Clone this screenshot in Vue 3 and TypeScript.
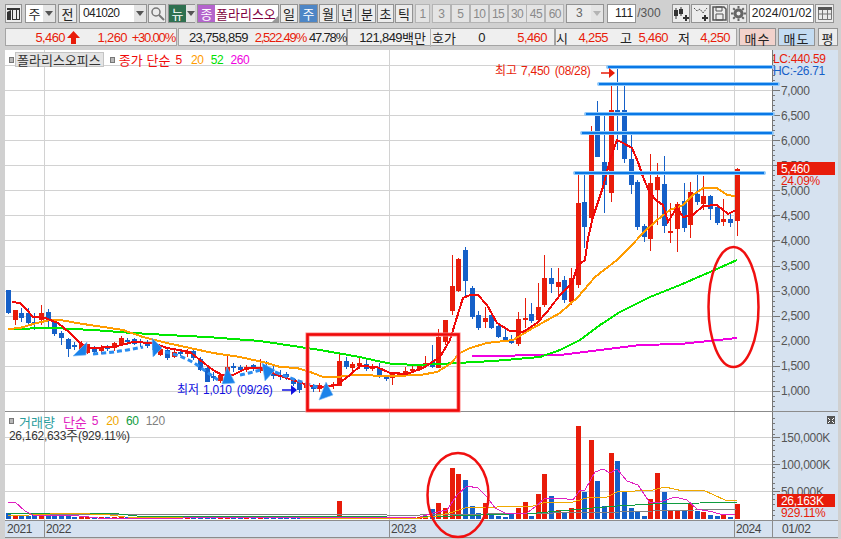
<script setup lang="ts">
type Candle = [number, number, number, number, number];

// top, bottom, high, low, blue (screen px)
const candles: Candle[] = [
  [290, 313, 290, 314, 1], [310, 320, 310, 325, 0], [313, 318, 308, 322, 1], [313, 323, 308, 325, 1],
  [322, 323, 313, 330, 1], [313, 320, 305, 325, 0], [312, 320, 309, 327, 1], [322, 334, 320, 336, 1],
  [333, 338, 331, 345, 1], [339, 349, 338, 357, 1], [345, 346, 342, 350, 1], [344, 350, 341, 352, 0],
  [344, 353, 344, 354, 0], [347, 352, 346, 354, 1], [347, 351, 345, 354, 0], [347, 348, 345, 351, 1],
  [343, 348, 342, 351, 0], [338, 344, 336, 345, 0], [340, 341, 338, 345, 1], [339, 344, 338, 345, 1],
  [341, 343, 339, 347, 1], [342, 346, 340, 348, 1], [344, 350, 340, 356, 1], [349, 355, 348, 356, 0],
  [350, 358, 348, 360, 1], [352, 357, 350, 358, 0], [352, 353, 349, 356, 1], [351, 354, 349, 357, 0],
  [351, 358, 350, 360, 1], [359, 370, 357, 371, 1], [368, 382, 367, 382, 1], [376, 378, 372, 381, 1],
  [375, 381, 373, 383, 0], [367, 375, 356, 376, 0], [366, 368, 363, 372, 1], [367, 370, 365, 372, 1],
  [367, 370, 365, 372, 0], [365, 369, 364, 371, 1], [367, 371, 359, 373, 0], [368, 370, 361, 375, 1],
  [374, 376, 366, 379, 1], [375, 377, 370, 380, 1], [374, 377, 372, 380, 1], [379, 384, 378, 386, 1],
  [383, 390, 382, 393, 1], [385, 388, 383, 391, 0], [386, 389, 384, 392, 1], [385, 389, 383, 392, 0],
  [385, 387, 383, 390, 0], [384, 386, 382, 389, 0], [361, 386, 353, 386, 0], [361, 367, 357, 369, 1],
  [364, 368, 362, 371, 0], [363, 366, 357, 369, 0], [364, 369, 359, 371, 1], [366, 369, 364, 371, 0],
  [368, 377, 363, 378, 1], [376, 379, 375, 381, 1], [374, 378, 374, 385, 0], [374, 375, 372, 376, 0],
  [371, 373, 367, 376, 0], [369, 371, 366, 373, 0], [365, 370, 365, 371, 0], [363, 366, 356, 367, 0],
  [362, 367, 345, 368, 1], [337, 368, 329, 368, 0], [320, 342, 320, 345, 0], [286, 311, 255, 315, 0],
  [259, 291, 258, 292, 0], [250, 281, 247, 298, 1], [288, 317, 286, 319, 1], [315, 328, 311, 330, 1],
  [318, 322, 307, 328, 0], [315, 328, 312, 329, 1], [326, 337, 324, 338, 1], [337, 340, 328, 341, 1],
  [340, 343, 335, 344, 1], [319, 344, 312, 346, 0], [318, 320, 298, 328, 0], [314, 321, 303, 323, 1],
  [307, 320, 283, 322, 0], [278, 305, 255, 307, 0], [278, 284, 268, 293, 1], [282, 287, 268, 297, 0],
  [280, 300, 276, 303, 1], [278, 302, 268, 305, 0], [203, 285, 174, 288, 0], [202, 227, 174, 248, 1],
  [134, 218, 126, 220, 0], [115, 157, 101, 157, 1], [162, 185, 115, 213, 1], [110, 193, 83, 202, 0],
  [110, 113, 67, 150, 1], [110, 159, 85, 163, 1], [159, 185, 134, 194, 1], [182, 227, 180, 230, 1],
  [226, 237, 224, 242, 1], [183, 239, 154, 251, 0], [177, 190, 163, 225, 0], [184, 226, 156, 233, 1],
  [231, 232, 203, 243, 0], [204, 229, 202, 252, 0], [201, 228, 183, 232, 1], [192, 225, 182, 238, 0],
  [194, 202, 171, 205, 1], [196, 204, 176, 210, 0], [196, 209, 195, 220, 1], [207, 223, 206, 225, 1],
  [219, 222, 199, 226, 0], [219, 223, 213, 227, 1], [169, 221, 168, 236, 0],
];
const cx = (i: number) => Math.round(8 + 6.623 * i);

const volTops: Record<number, number> = {
  0: 513, 1: 515, 2: 515, 3: 516, 4: 515, 5: 516, 6: 515, 7: 516, 8: 516, 9: 516, 50: 501,
  64: 509, 65: 503, 66: 508, 67: 468, 68: 474, 69: 480, 70: 506, 71: 513, 72: 503, 73: 515, 74: 516, 75: 517,
  76: 514, 77: 508, 78: 502, 79: 516, 80: 494, 81: 474, 82: 496, 83: 510, 84: 513, 85: 508, 86: 426, 87: 492,
  88: 440, 89: 481, 90: 506, 91: 453, 92: 461, 93: 492, 94: 508, 95: 511, 96: 516, 97: 499, 98: 473, 99: 492,
  100: 510, 101: 511, 102: 511, 103: 504, 104: 511, 105: 512, 106: 515, 107: 516, 108: 515, 109: 517, 110: 504,
};
const volBars = candles.map((c, i) => ({ x: cx(i) - 2, y: volTops[i] ?? 517, blue: c[4] === 1 }));

const pts = (a: number[][]) => a.map((p) => p.join(",")).join(" ");

const ma5 = pts([[12,302],[20,303],[27,310],[33,317],[45,318],[58,323],[70,333],[80,343],[90,348],[113,347],[133,342],[153,343],[167,348],[190,352],[200,360],[213,370],[222,375],[233,375],[247,368],[263,368],[277,375],[293,380],[307,385],[320,387],[337,385],[350,375],[360,366],[377,367],[390,373],[407,374],[423,368],[440,357],[450,340],[457,317],[463,298],[470,295],[478,295],[487,305],[497,323],[510,331],[523,332],[537,323],[547,312],[560,295],[572,283],[578,265],[585,260],[588,238],[593,217],[603,187],[610,160],[617,140],[623,143],[632,148],[638,162],[643,177],[650,193],[657,201],[663,205],[668,222],[677,207],[683,217],[693,215],[703,206],[717,205],[728,214],[736,210]]);
const ma20 = pts([[8,329],[20,328],[33,324],[50,320],[60,320],[83,324],[110,328],[123,330],[143,337],[167,343],[190,348],[213,353],[240,357],[267,363],[280,367],[297,368],[313,373],[323,377],[337,377],[353,375],[393,376],[420,375],[437,372],[450,364],[460,353],[470,348],[487,343],[513,340],[533,328],[560,313],[578,297],[595,277],[617,260],[630,247],[643,233],[657,220],[670,210],[683,205],[693,195],[703,188],[717,188],[727,195],[735,196]]);
const ma52 = pts([[8,329],[53,328],[93,330],[133,333],[167,335],[207,337],[260,341],[280,344],[300,347],[320,350],[337,353],[360,357],[377,361],[393,364],[420,365],[457,363],[493,361],[540,357],[560,350],[580,340],[600,325],[620,312],[650,297],[680,285],[710,272],[737,260]]);
const ma260 = pts([[472,356],[560,355],[600,350],[640,345],[680,344],[737,338]]);

const vol5 = pts([[8,502],[15,502],[25,511],[33,515],[70,515],[98,518],[183,518],[420,517],[433,513],[447,510],[457,495],[467,486],[478,488],[487,497],[495,508],[507,514],[527,513],[535,507],[545,498],[567,499],[573,500],[580,490],[585,490],[595,472],[603,469],[610,473],[617,469],[627,481],[638,485],[650,503],[660,502],[675,497],[687,500],[697,509],[713,512],[723,515],[735,514]]);
const vol20 = pts([[8,516],[50,514],[70,513],[110,515],[125,517],[300,518],[420,518],[437,516],[453,512],[465,508],[497,507],[533,506],[547,502],[573,502],[590,497],[607,497],[617,492],[653,490],[665,487],[683,491],[703,490],[725,500],[737,501]]);
const vol60 = pts([[8,513],[110,513],[137,516],[303,516],[387,517],[420,517],[453,516],[537,513],[593,508],[617,506],[653,504],[700,503],[703,502],[737,502]]);
const vol120 = pts([[37,514],[387,515],[420,515],[620,512],[653,511],[737,509]]);

const hLines = [
  [608, 772, 67], [599, 778, 84], [586, 773, 114], [582, 772, 133], [575, 764, 173],
];
const dashes = [
  "M93 354 Q120 352 143 347",
  "M165 352 Q185 356 200 367 L218 380",
  "M240 375 Q250 373 260 370",
  "M275 372 Q300 382 320 388",
];
const arrows = [
  "73,356 87,342 86,355", "152,338 162,348 153,357", "222,384 227,367 235,383", "262,363 275,370 265,381", "326,382 333,395 319,400",
];

const priceLabels = ["7,000","6,500","6,000","5,500","5,000","4,500","4,000","3,500","3,000","2,500","2,000","1,500","1,000"];
const priceY = (i: number) => 90 + i * 25.08;
const priceGrid = [65, ...priceLabels.map((_, i) => priceY(i))];
const minorTicks = Array.from({ length: 71 }, (_, i) => 55 + i * 5.016);
const volMinor = Array.from({ length: 20 }, (_, i) => 418 + i * 5.4);
const volLabels: [string, number][] = [["150,000K", 437], ["100,000K", 464], ["50,000K", 491]];
const frames = ["1", "3", "5", "10", "15", "30", "45", "60"];
</script>

<template>
  <div class="app">
    <div class="toolbar">
      <button class="btn w17">
        <svg width="13" height="13" viewBox="0 0 13 13"><path d="M0 1h13v2H0zM5 3h1v10H5zM9 3h1v10H9zM0 5l4-2v10H0z" fill="#333" /><path d="M12 3h1v10h-1zM5 12h8v1H5z" fill="#333" /></svg>
      </button>
      <div class="combo w31 ml3"><span class="field ko c">주</span><span class="drop"><i class="tri"></i></span></div>
      <button class="btn w19 ml2 ko">전</button>
      <div class="combo w68 ml2">
        <span class="field code">041020</span><span class="drop"><i class="tri"></i></span>
      </div>
      <button class="btn w18 ml1">
        <svg width="15" height="15" viewBox="0 0 15 15"><circle cx="6" cy="6" r="4" fill="none" stroke="#777" stroke-width="1.5" /><path d="M9 9l5 5" stroke="#777" stroke-width="2" /></svg>
      </button>
      <div class="combo w27 ml2"><span class="news ko">뉴</span><span class="drop small"><i class="tri"></i></span></div>
      <div class="stock ml2"><span class="jong ko">종</span><span class="sname ko">폴라리스오</span><i class="corner"></i></div>
      <button class="btn w18 ml1 ko">일</button>
      <button class="btn w19 ml1 ko active">주</button>
      <button class="btn w18 ml1 ko">월</button>
      <button class="btn w18 ml1 ko">년</button>
      <button class="btn w18 ml2 ko">분</button>
      <button class="btn w17 ml1 ko">초</button>
      <button class="btn w18 ml1 ko">틱</button>
      <div class="frames">
        <button v-for="f in frames" :key="f" class="frame">{{ f }}</button>
      </div>
      <div class="combo w38 ml2 dim"><span class="field c">3</span><span class="drop"><i class="tri pale"></i></span></div>
      <span class="count ml3">111</span><span class="total">/300</span>
      <button class="btn w18 icon-first">
        <svg width="16" height="16" viewBox="0 0 16 16"><path d="M3 2v11M8 1v9" stroke="#333" /><path d="M1 4h4v6H1zM6 3h4v5H6z" fill="#333" /><path d="M13 9v6M10 12h6" stroke="#333" stroke-width="2" /></svg>
      </button>
      <button class="btn w19 ml1">
        <svg width="16" height="16" viewBox="0 0 16 16"><path d="M1 2l3 3 3-2 3 4 4-5" fill="none" stroke="#555" stroke-dasharray="2 1" /><path d="M12 9v6M9 12h6" stroke="#333" stroke-width="2" /></svg>
      </button>
      <button class="btn w18">
        <svg width="15" height="15" viewBox="0 0 15 15"><path d="M1 1h11l2 2v11H1z" fill="none" stroke="#555" stroke-width="1.5" /><path d="M4 1h6v4H4zM4 8h7v6H4z" fill="none" stroke="#555" /></svg>
      </button>
      <button class="btn w18 ml1">
        <svg width="15" height="15" viewBox="0 0 15 15"><circle cx="7.5" cy="7.5" r="3.5" fill="none" stroke="#666" stroke-width="3" /><path d="M7.5 0v15M0 7.5h15M2.2 2.2l10.6 10.6M12.8 2.2L2.2 12.8" stroke="#666" stroke-width="2" stroke-dasharray="2.5 10 2.5" /></svg>
      </button>
      <span class="date ml2">2024/01/02</span>
      <button class="btn w19 ml1">
        <svg width="14" height="13" viewBox="0 0 14 13"><path d="M0 0h14v3H0z" fill="#555" /><path d="M.5 3v9.5h13V3M0 7h14M4.5 3v10M9.5 3v10" fill="none" stroke="#777" /></svg>
      </button>
    </div>

    <div class="info">
      <div class="seg s1">
        <span class="num red w59r">5,460</span>
        <svg class="up" width="13" height="13" viewBox="0 0 13 13"><path d="M6.5 0L13 7H9v6H4V7H0z" fill="#e81c0a" /></svg>
        <span class="num red w47r">1,260</span>
        <span class="num red pct w48r">+30.00%</span>
      </div>
      <div class="seg s2">
        <span class="num w69r">23,758,859</span>
        <span class="num red pct w58r">2,522.49%</span>
        <span class="num pct w40r">47.78%</span>
      </div>
      <div class="seg s3">
        <span class="num w54r">121,849</span><span class="ko txt">백만</span>
        <span class="ko txt hoga">호가</span>
        <span class="num w29r">0</span>
        <span class="num red w62r">5,460</span>
      </div>
      <div class="seg s4">
        <span class="ko txt">시</span><span class="num red w40r">4,255</span>
        <span class="ko txt m12">고</span><span class="num red w36r">5,460</span>
        <span class="ko txt m10">저</span><span class="num red w40r">4,250</span>
      </div>
      <button class="trade buy ko">매수</button>
      <button class="trade sell ko">매도</button>
      <button class="trade eval ko">평</button>
    </div>

    <div class="chart">
      <div class="pane">
        <div class="legend">
          <i class="sq"></i><span class="lname ko">폴라리스오피스</span><i class="sq"></i>
          <span class="lred ko">종가 단순</span>
          <span class="lnum lred5">5</span><span class="lnum lorange">20</span><span class="lnum lgreen">52</span><span class="lnum lpink">260</span>
        </div>
        <svg class="plot" width="767" height="361" viewBox="5 50 767 361">
          <g class="crisp" stroke="#d2d2d2">
            <line v-for="y in priceGrid" :key="y" x1="5" x2="772" :y1="Math.round(y)" :y2="Math.round(y)" />
            <line x1="44.5" x2="44.5" y1="50" y2="411" />
            <line x1="389.5" x2="389.5" y1="50" y2="411" />
            <line x1="734.5" x2="734.5" y1="50" y2="411" />
          </g>
          <g class="crisp">
            <template v-for="(c, i) in candles" :key="i">
              <rect :x="cx(i)" :y="c[2]" width="1" :height="c[3] - c[2]" :fill="c[4] ? '#1560c8' : '#e81c0a'" />
              <rect :x="cx(i) - 2" :y="c[0]" width="5" :height="Math.max(c[1] - c[0], 2)" :fill="c[4] ? '#1560c8' : '#e81c0a'" />
            </template>
          </g>
          <g class="crisp" fill="none" stroke-width="2">
            <polyline :points="ma260" stroke="#f000e0" />
            <polyline :points="ma52" stroke="#00e800" />
            <polyline :points="ma20" stroke="#ff9c00" />
            <polyline :points="ma5" stroke="#f00a0a" />
          </g>
          <g v-for="l in hLines" :key="l[2]">
            <line :x1="l[0]" :x2="l[1]" :y1="l[2]" :y2="l[2]" stroke="#8cc6f8" stroke-width="4" stroke-linecap="round" />
            <line :x1="l[0]" :x2="l[1]" :y1="l[2]" :y2="l[2]" stroke="#0a78e6" stroke-width="2.2" />
          </g>
          <path v-for="d in dashes" :key="d" :d="d" fill="none" stroke="#2a8cf0" stroke-width="3" stroke-dasharray="5 3" />
          <polygon v-for="a in arrows" :key="a" :points="a" fill="#1a82ea" stroke="#7cbcf6" stroke-width=".6" />
          <rect x="307.5" y="334.5" width="151" height="76" fill="none" stroke="#ff8080" stroke-width="4" />
          <rect x="307.5" y="334.5" width="151" height="76" fill="none" stroke="#ee0a0a" stroke-width="2.5" />
          <ellipse cx="733.5" cy="307" rx="25" ry="60" fill="none" stroke="#f01010" stroke-width="2.5" />
          <text class="label" x="495" y="75" fill="#e81c0a"><tspan class="hg">최고</tspan><tspan dx="4">7,450</tspan><tspan dx="5">(08/28)</tspan></text>
          <path d="M601 73h9" stroke="#e81c0a" stroke-width="1.5" />
          <path d="M609 68l6 5-6 5z" fill="#e81c0a" />
          <text class="label" x="177" y="394" fill="#1010e0"><tspan class="hg">최저</tspan><tspan dx="4">1,010</tspan><tspan dx="5">(09/26)</tspan></text>
          <path d="M282 390h10" stroke="#1010e0" stroke-width="1.5" />
          <path d="M291 385l6 5-6 5z" fill="#1010e0" />
        </svg>
      </div>
      <div class="axis">
        <svg width="66" height="361" viewBox="772 50 66 361">
          <g class="crisp" stroke="#777">
            <line x1="772.5" x2="772.5" y1="50" y2="411" />
            <line v-for="y in minorTicks" :key="y" x1="773" x2="775" :y1="Math.round(y)" :y2="Math.round(y)" />
            <line v-for="(_, i) in priceLabels" :key="i" x1="773" x2="780" :y1="Math.round(priceY(i))" :y2="Math.round(priceY(i))" />
          </g>
          <text v-for="(p, i) in priceLabels" :key="p" class="label" x="781" :y="priceY(i) + 4.5" fill="#555">{{ p }}</text>
          <text class="label" x="773" y="63" fill="#e81c0a">LC:440.59</text>
          <text class="label" x="773" y="75" fill="#1560c8">HC:-26.71</text>
          <rect x="777" y="162" width="58" height="13" fill="#e81c0a" />
          <text class="label" x="781" y="173" fill="#fff">5,460</text>
          <text class="label" x="781" y="185" fill="#e81c0a">24.09%</text>
        </svg>
      </div>

      <div class="divider"></div>

      <div class="pane">
        <div class="legend vol">
          <div class="vrow">
            <i class="sq"></i><span class="vname ko">거래량</span><span class="vma ko">단순</span>
            <span class="lnum v5">5</span><span class="lnum vo">20</span><span class="lnum vg">60</span><span class="lnum vgr">120</span>
          </div>
          <div class="vsum"><span>26,162,633</span><span class="ko">주</span><span>(929.11%)</span></div>
        </div>
        <svg class="plot" width="767" height="108" viewBox="5 412 767 108">
          <g class="crisp" stroke="#d2d2d2">
            <line x1="5" x2="772" y1="437" y2="437" />
            <line x1="5" x2="772" y1="464" y2="464" />
            <line x1="5" x2="772" y1="491" y2="491" />
            <line x1="44.5" x2="44.5" y1="412" y2="520" />
            <line x1="389.5" x2="389.5" y1="412" y2="520" />
            <line x1="734.5" x2="734.5" y1="412" y2="520" />
          </g>
          <g class="crisp">
            <rect v-for="(b, i) in volBars" :key="i" :x="b.x" :y="b.y" width="5" :height="519 - b.y" :fill="b.blue ? '#1560c8' : '#e81c0a'" />
          </g>
          <g class="crisp" fill="none" stroke-width="1">
            <polyline :points="vol120" stroke="#808080" />
            <polyline :points="vol60" stroke="#109c40" />
            <polyline :points="vol20" stroke="#f0a800" />
            <polyline :points="vol5" stroke="#e020c0" />
          </g>
          <ellipse cx="458" cy="495" rx="30.5" ry="42" fill="none" stroke="#f01010" stroke-width="2.5" />
        </svg>
      </div>
      <div class="axis">
        <button class="close">
          <svg width="8" height="7" viewBox="0 0 8 7"><path d="M1 1l2 2M7 1L5 3M1 6l2-2M7 6L5 4" stroke="#fff" /></svg>
        </button>
        <svg width="66" height="108" viewBox="772 412 66 108">
          <g class="crisp" stroke="#777">
            <line x1="772.5" x2="772.5" y1="412" y2="520" />
            <line v-for="y in volMinor" :key="y" x1="773" x2="775" :y1="Math.round(y)" :y2="Math.round(y)" />
            <line v-for="l in volLabels" :key="l[0]" x1="773" x2="780" :y1="l[1]" :y2="l[1]" />
          </g>
          <text v-for="l in volLabels" :key="l[0]" class="label" x="781" :y="l[1] + 4.5" fill="#555">{{ l[0] }}</text>
          <rect x="777" y="494" width="58" height="13" fill="#e81c0a" />
          <text class="label" x="781" y="505" fill="#fff">26,163K</text>
          <text class="label" x="781" y="517" fill="#e81c0a">929.11%</text>
        </svg>
      </div>

      <div class="dates">
        <span class="yr y21">2021</span>
        <span class="yr y22">2022</span>
        <span class="yr y23">2023</span>
        <span class="yr y24">2024</span>
      </div>
      <div class="cur"><span>01/02</span></div>
    </div>
  </div>
</template>

<style>
html,
body {
  margin: 0;
  background: #d0d0d0;
}
</style>

<style scoped>
.app {
  width: 841px;
  height: 539px;
  overflow: hidden;
  background: #d0d0d0;
  color: #222;
  font-family: "Liberation Sans", "Noto Sans CJK KR", sans-serif;
  font-size: 12px;
}
.ko {
  font-family: "Noto Sans CJK KR", sans-serif;
  font-size: 13px;
}
button {
  padding: 0;
  margin: 0;
  color: #222;
  font-family: inherit;
}
.toolbar {
  display: flex;
  align-items: stretch;
  height: 19px;
  padding: 4px 0 0 5px;
}
.btn {
  display: flex;
  align-items: center;
  justify-content: center;
  flex: none;
  box-sizing: border-box;
  background: #ececec;
  border: 1px solid #939393;
}
.active {
  background: #4d86c6;
  color: #fff;
}
.w17 { width: 17px; }
.w18 { width: 18px; }
.w19 { width: 19px; }
.w27 { width: 27px; }
.w31 { width: 31px; }
.w38 { width: 38px; }
.w68 { width: 68px; }
.ml1 { margin-left: 1px; }
.ml2 { margin-left: 2px; }
.ml3 { margin-left: 3px; }
.combo {
  display: flex;
  flex: none;
  box-sizing: border-box;
  border: 1px solid #939393;
  background: #ececec;
}
.field {
  flex: 1;
  background: #fff;
  line-height: 17px;
}
.c {
  text-align: center;
}
.code {
  padding-left: 3px;
  letter-spacing: -0.6px;
}
.dim .field {
  background: #ececec;
  color: #666;
}
.drop {
  display: flex;
  align-items: center;
  justify-content: center;
  flex: none;
  width: 12px;
  background: #e4e4e4;
}
.small {
  width: 9px;
}
.tri {
  width: 0;
  height: 0;
  border: 4px solid transparent;
  border-top: 5px solid #555;
  border-bottom: 0;
}
.pale {
  border-top-color: #b4b4b4;
}
.news {
  flex: none;
  width: 17px;
  background: #2f7050;
  color: #fff;
  text-align: center;
  line-height: 17px;
}
.stock {
  position: relative;
  display: flex;
  flex: none;
  box-sizing: border-box;
  width: 82px;
  border: 1px solid #939393;
  background: #fff;
  overflow: hidden;
}
.jong {
  flex: none;
  width: 17px;
  background: #b464cc;
  color: #fff;
  text-align: center;
  line-height: 17px;
}
.sname {
  padding-left: 1px;
  color: #800040;
  line-height: 17px;
  white-space: nowrap;
}
.corner {
  position: absolute;
  right: 0;
  bottom: 0;
  border: 3px solid transparent;
  border-right-color: #999;
  border-bottom-color: #999;
}
.frames {
  display: flex;
  margin-left: 2px;
}
.frame {
  flex: none;
  box-sizing: border-box;
  width: 19px;
  margin-right: -0.1px;
  border: 1px solid #b4b4b4;
  background: #e4e4e4;
  color: #8a8a8a;
  font-family: "Liberation Sans", sans-serif;
  font-size: 12px;
  letter-spacing: -0.6px;
}
.frame:first-child {
  width: 15px;
}
.frame:nth-child(2) {
  margin-left: 2px;
}
.count {
  flex: none;
  box-sizing: border-box;
  width: 29px;
  padding-right: 2px;
  border: 1px solid #939393;
  background: #fff;
  text-align: right;
  line-height: 17px;
}
.total {
  flex: none;
  width: 35px;
  padding-left: 1px;
  color: #555;
  line-height: 19px;
}
.icon-first {
  margin-left: 0;
}
.date {
  flex: none;
  box-sizing: border-box;
  width: 65px;
  border: 1px solid #939393;
  background: #fff;
  text-align: center;
  line-height: 17px;
}
.info {
  display: flex;
  height: 18px;
  margin: 5px 3px 0 5px;
}
.seg {
  display: flex;
  align-items: center;
  flex: none;
  box-sizing: border-box;
  border: 1px solid #a4a4a4;
  background: #efefef;
  white-space: nowrap;
}
.s1 { width: 172px; }
.s2 { width: 169px; margin-left: 1px; }
.s3 { width: 208px; }
.s4 { width: 182px; }
.num {
  flex: none;
  font-size: 13px;
  letter-spacing: -0.6px;
  text-align: right;
}
.pct {
  letter-spacing: -1.2px;
}
.red {
  color: #e81c0a;
}
.txt {
  flex: none;
}
.up {
  flex: none;
  margin-left: 2px;
}
.w59r { width: 59px; }
.w47r { width: 47px; }
.w48r { width: 48px; }
.w69r { width: 69px; }
.w58r { width: 58px; }
.w40r { width: 40px; }
.w54r { width: 54px; }
.w29r { width: 29px; }
.w62r { width: 62px; }
.w36r { width: 36px; }
.m12 { margin-left: 12px; }
.m10 { margin-left: 10px; }
.hoga {
  margin-left: 4px;
  padding-left: 1px;
  border-left: 1px solid #b4b4b4;
}
.trade {
  flex: none;
  box-sizing: border-box;
  margin-left: 2px;
  border: 1px solid #939393;
  letter-spacing: 1px;
}
.buy { width: 37px; background: #f2d2cc; }
.sell { width: 37px; margin-left: 2px; background: #c4dcf2; }
.eval { width: 20px; margin-left: 3px; background: #ececec; }
.chart {
  display: grid;
  grid-template-columns: 767px 66px;
  grid-template-rows: 361px 1px 108px 18px;
  margin: 4px 3px 0 5px;
  background: #fff;
}
.pane {
  position: relative;
  background: #fff;
}
.plot {
  position: relative;
  z-index: 1;
  display: block;
  overflow: visible;
}
.axis {
  position: relative;
  background: #d6e2f0;
}
.axis svg {
  display: block;
}
.crisp {
  shape-rendering: crispEdges;
}
.legend {
  position: absolute;
  top: 2px;
  left: 4px;
  z-index: 2;
  display: flex;
  align-items: center;
  height: 15px;
  white-space: nowrap;
}
.sq {
  flex: none;
  box-sizing: border-box;
  width: 5px;
  height: 6px;
  border: 1px solid #777;
  background: #b8b8b8;
}
.lname {
  margin: 0 6px 0 1px;
  padding: 0 2px 0 1px;
  border: 1px solid #c4c4c4;
  background: #e4e4e4;
  line-height: 13px;
  color: #333;
}
.lred {
  margin-left: 4px;
  color: #f00a0a;
  word-spacing: 1px;
}
.lnum {
  margin-left: 7px;
  letter-spacing: -0.3px;
}
.lred5 {
  margin-left: 5px;
  color: #f00a0a;
}
.lorange { margin-left: 9px; color: #ff9c00; }
.lgreen { color: #00e000; }
.lpink { color: #f000e0; }
.vol {
  display: block;
  top: 2px;
  height: auto;
}
.vrow {
  display: flex;
  align-items: center;
  height: 14px;
}
.vname {
  margin-left: 5px;
  color: #2a9d9d;
}
.vma {
  margin-left: 8px;
  color: #e020c0;
}
.v5 {
  margin-left: 5px;
  color: #e020c0;
}
.vo { margin-left: 8px; color: #f0a800; }
.vg { color: #109c40; }
.vgr { color: #808080; }
.vsum {
  height: 13px;
  color: #333;
  line-height: 13px;
  letter-spacing: -0.3px;
}
.vsum .ko {
  font-size: 13px;
  letter-spacing: 0;
}
.label {
  font-family: "Liberation Sans", sans-serif;
  font-size: 12px;
  letter-spacing: -0.3px;
}
.hg {
  font-family: "Noto Sans CJK KR", sans-serif;
  font-size: 12px;
  letter-spacing: 0;
}
.divider {
  grid-column: 1 / 3;
  background: #8c8c8c;
}
.close {
  position: absolute;
  top: 4px;
  right: 3px;
  display: flex;
  align-items: center;
  justify-content: center;
  width: 8px;
  height: 8px;
  border: 0;
  background: #555;
}
.dates {
  position: relative;
  border-top: 1px solid #8c8c8c;
  border-bottom: 1px solid #8c8c8c;
  background: #d6e2f0;
  color: #444;
  font-size: 12px;
  line-height: 17px;
  letter-spacing: -0.4px;
}
.yr {
  position: absolute;
  top: 0;
  height: 100%;
  padding-left: 1px;
  border-left: 1px solid #8c8c8c;
}
.y21 { left: 1px; border-left: 0; }
.y22 { left: 39px; }
.y23 { left: 384px; }
.y24 { left: 729px; }
.cur {
  box-sizing: border-box;
  padding-left: 9px;
  border-top: 1px solid #8c8c8c;
  border-bottom: 1px solid #8c8c8c;
  border-left: 1px solid #8c8c8c;
  background: #d6e2f0;
  color: #444;
  font-size: 12px;
  letter-spacing: -0.3px;
  line-height: 17px;
}
</style>
